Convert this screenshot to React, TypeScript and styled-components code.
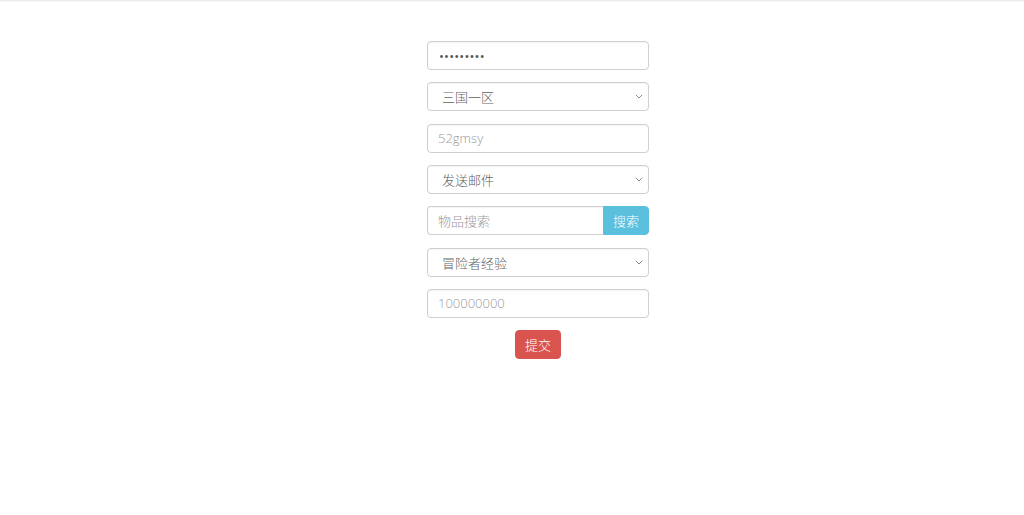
import React from "react";
import styled, { createGlobalStyle } from "styled-components";

const Global = createGlobalStyle`
  html, body { margin: 0; padding: 0; background: #fff; }
  body { font-family: "Open Sans", "Noto Sans CJK SC", sans-serif; }
  * { box-sizing: border-box; }
`;

const TopBar = styled.div`
  height: 2px;
  border-top: 1px solid #ececec;
  background: #f7f7f7;
`;

const Form = styled.form`
  width: 222px;
  margin: 39px 0 0 427px;
  display: flex;
  flex-direction: column;
  gap: 12.33px;
`;

const fieldBase = `
  width: 100%;
  height: 29px;
  border: 1px solid #cfcfcf;
  border-radius: 4px;
  background: #fff;
  font-family: "Open Sans", "Noto Sans CJK SC", sans-serif;
  font-size: 13px;
  font-weight: 300;
  color: #5f5f5f;
  outline: none;
  box-shadow: inset 0 1px 1px rgba(0,0,0,0.04);
`;

const Input = styled.input`
  ${fieldBase}
  padding: 0 10px;
  &::placeholder { color: #999; font-weight: 300; }
`;

const PasswordBox = styled.div`
  ${fieldBase}
  padding: 0 11px;
  display: flex;
  align-items: center;
  font-size: 13px;
  font-weight: 400;
  letter-spacing: 0.2px;
  color: #555;
`;

const SelectBox = styled.div`
  ${fieldBase}
  padding: 0 5px 0 14px;
  display: flex;
  align-items: center;
  justify-content: space-between;
`;

const Group = styled.div`
  display: flex;
  height: 29px;
`;

const GroupInput = styled(Input)`
  flex: 1;
  border-right: none;
  border-radius: 4px 0 0 4px;
`;

const Button = styled.button<{ $bg: string }>`
  height: 29px;
  width: 46px;
  border: 1px solid ${(p) => p.$bg};
  background: ${(p) => p.$bg};
  color: #fff;
  font-family: "Open Sans", "Noto Sans CJK SC", sans-serif;
  font-size: 13px;
  font-weight: 300;
  border-radius: 4px;
  padding: 0;
  cursor: pointer;
`;

const SearchButton = styled(Button)`
  border-radius: 0 4px 4px 0;
`;

const SubmitRow = styled.div`
  display: flex;
  justify-content: center;
`;

const Chevron = () => (
  <svg width="8" height="5" viewBox="0 0 8 5" fill="none">
    <path d="M0.8 0.8l3.2 3.2 3.2-3.2" stroke="#888" strokeWidth="1" />
  </svg>
);

const Select = ({ label }: { label: string }) => (
  <SelectBox>
    <span>{label}</span>
    <Chevron />
  </SelectBox>
);

export default function App() {
  return (
    <>
      <Global />
      <TopBar />
      <Form onSubmit={(e) => e.preventDefault()}>
        <PasswordBox>•••••••••</PasswordBox>
        <Select label="三国一区" />
        <Input placeholder="52gmsy" />
        <Select label="发送邮件" />
        <Group>
          <GroupInput placeholder="物品搜索" />
          <SearchButton type="button" $bg="#5bc0de">搜索</SearchButton>
        </Group>
        <Select label="冒险者经验" />
        <Input placeholder="100000000" />
        <SubmitRow>
          <Button type="submit" $bg="#d9534f">提交</Button>
        </SubmitRow>
      </Form>
    </>
  );
}
